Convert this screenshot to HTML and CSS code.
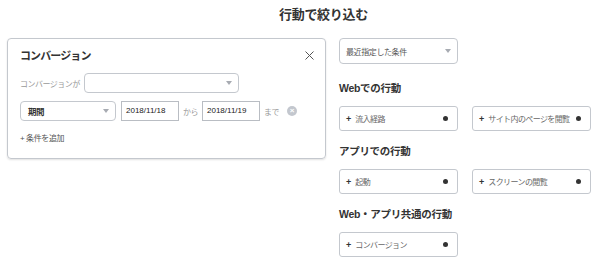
FILE: index.html
```html
<!DOCTYPE html>
<html lang="ja">
<head>
    <meta charset="UTF-8">
    <title>行動で絞り込む</title>
    <link rel="stylesheet" href="styles.css">
</head>
<body>
    <div class="page">
        <!-- ページタイトル -->
        <div class="page-title">行動で絞り込む</div>

        <div class="layout">
            <!-- 条件カード -->
            <div class="card">
                <div class="card-head">
                    <div class="card-title">コンバージョン</div>
                    <svg class="close-btn" width="9" height="9" viewBox="0 0 9 9">
                        <path d="M0.5 0.5 L8.5 8.5 M8.5 0.5 L0.5 8.5" stroke="#555" stroke-width="1" fill="none"/>
                    </svg>
                </div>
                <div class="row">
                    <span class="label">コンバージョンが</span>
                    <div class="select select-wide"><span></span><i class="caret"></i></div>
                </div>
                <div class="row row-date">
                    <div class="select select-period"><span>期間</span><i class="caret"></i></div>
                    <div class="date-input">2018/11/18</div>
                    <span class="label">から</span>
                    <div class="date-input">2018/11/19</div>
                    <span class="label">まで</span>
                    <span class="clear-btn">×</span>
                </div>
                <div class="add-link">+ 条件を追加</div>
            </div>

            <!-- 行動リスト -->
            <div class="side">
                <div class="select select-recent"><span>最近指定した条件</span><i class="caret"></i></div>

                <div class="section-title">Webでの行動</div>
                <div class="btn-grid">
                    <div class="action-btn"><span><b>+</b> 流入経路</span><i class="dot"></i></div>
                    <div class="action-btn"><span><b>+</b> サイト内のページを閲覧</span><i class="dot"></i></div>
                </div>

                <div class="section-title">アプリでの行動</div>
                <div class="btn-grid">
                    <div class="action-btn"><span><b>+</b> 起動</span><i class="dot"></i></div>
                    <div class="action-btn"><span><b>+</b> スクリーンの閲覧</span><i class="dot"></i></div>
                </div>

                <div class="section-title">Web・アプリ共通の行動</div>
                <div class="btn-grid">
                    <div class="action-btn"><span><b>+</b> コンバージョン</span><i class="dot"></i></div>
                </div>
            </div>
        </div>
    </div>
</body>
</html>
```

FILE: styles.css
```css
* {
    margin: 0;
    padding: 0;
    box-sizing: border-box;
}

body {
    background: #ffffff;
    font-family: "Liberation Sans", "Noto Sans CJK JP", sans-serif;
    color: #333;
}

.page {
    padding: 0 9px 0 7px;
}

/* タイトル */
.page-title {
    padding: 7px 0 0 272px;
    height: 38px;
    font-size: 13px;
    line-height: 16px;
    font-weight: 700;
    letter-spacing: -0.3px;
    color: #333;
}

.layout {
    display: flex;
    gap: 13px;
    align-items: flex-start;
}

/* 条件カード */
.card {
    width: 319px;
    height: 121px;
    border: 1px solid #c4c8ce;
    border-radius: 4px;
    box-shadow: 0 1px 2px rgba(0, 0, 0, 0.12);
    padding: 8px 11px 0 12px;
}

.card-head {
    display: flex;
    justify-content: space-between;
    align-items: center;
    height: 16px;
}

.card-title {
    font-size: 11px;
    font-weight: 700;
    letter-spacing: -0.9px;
    color: #333;
}

.row {
    display: flex;
    align-items: center;
    gap: 4px;
    margin-top: 10px;
    height: 20px;
}

.row-date {
    margin-top: 8px;
    gap: 5px;
}

.label {
    font-size: 8px;
    letter-spacing: -0.5px;
    color: #999;
}

.select {
    display: flex;
    justify-content: space-between;
    align-items: center;
    height: 20px;
    border: 1px solid #c4c8ce;
    border-radius: 4px;
    background: #fff;
    padding: 0 6px 0 7px;
    font-size: 8px;
    letter-spacing: -0.4px;
    color: #333;
}

.select-wide {
    width: 155px;
}

.select-period {
    width: 96px;
    font-weight: 700;
    font-size: 8.5px;
}

.select-recent {
    width: 119px;
    height: 26px;
    padding: 0 6px 0 6px;
    color: #555;
}

.caret {
    width: 0;
    height: 0;
    border-left: 3.5px solid transparent;
    border-right: 3.5px solid transparent;
    border-top: 4px solid #a7abb2;
}

.date-input {
    width: 58px;
    height: 20px;
    border: 1px solid #b9bdc3;
    padding-left: 4px;
    font-size: 8px;
    line-height: 18px;
    color: #222;
}

.row-date .label {
    margin: 0 -1px;
}

.clear-btn {
    width: 10px;
    height: 10px;
    border-radius: 50%;
    background: #c3c7ce;
    color: #fff;
    font-size: 8px;
    line-height: 10px;
    text-align: center;
    font-weight: 700;
    margin-left: 4px;
}

.add-link {
    margin-top: 10px;
    font-size: 8px;
    line-height: 16px;
    letter-spacing: -0.4px;
    color: #555;
}

/* 右側 */
.side {
    width: 252px;
}

.section-title {
    margin: 16px 0 10px;
    font-size: 10.5px;
    line-height: 16px;
    font-weight: 700;
    letter-spacing: -0.3px;
    color: #333;
}

.btn-grid + .section-title {
    margin-top: 12px;
}

.btn-grid {
    display: grid;
    grid-template-columns: 119px 119px;
    column-gap: 14px;
}

.action-btn {
    display: flex;
    justify-content: space-between;
    align-items: center;
    height: 25px;
    border: 1px solid #c4c8ce;
    border-radius: 3px;
    background: #fff;
    padding: 0 9px 0 6px;
    font-size: 8px;
    letter-spacing: -0.6px;
    white-space: nowrap;
    color: #666;
}

.action-btn b {
    color: #333;
    font-size: 9px;
    margin-right: 3px;
}

.dot {
    width: 5px;
    height: 5px;
    border-radius: 50%;
    background: #333;
}
```
